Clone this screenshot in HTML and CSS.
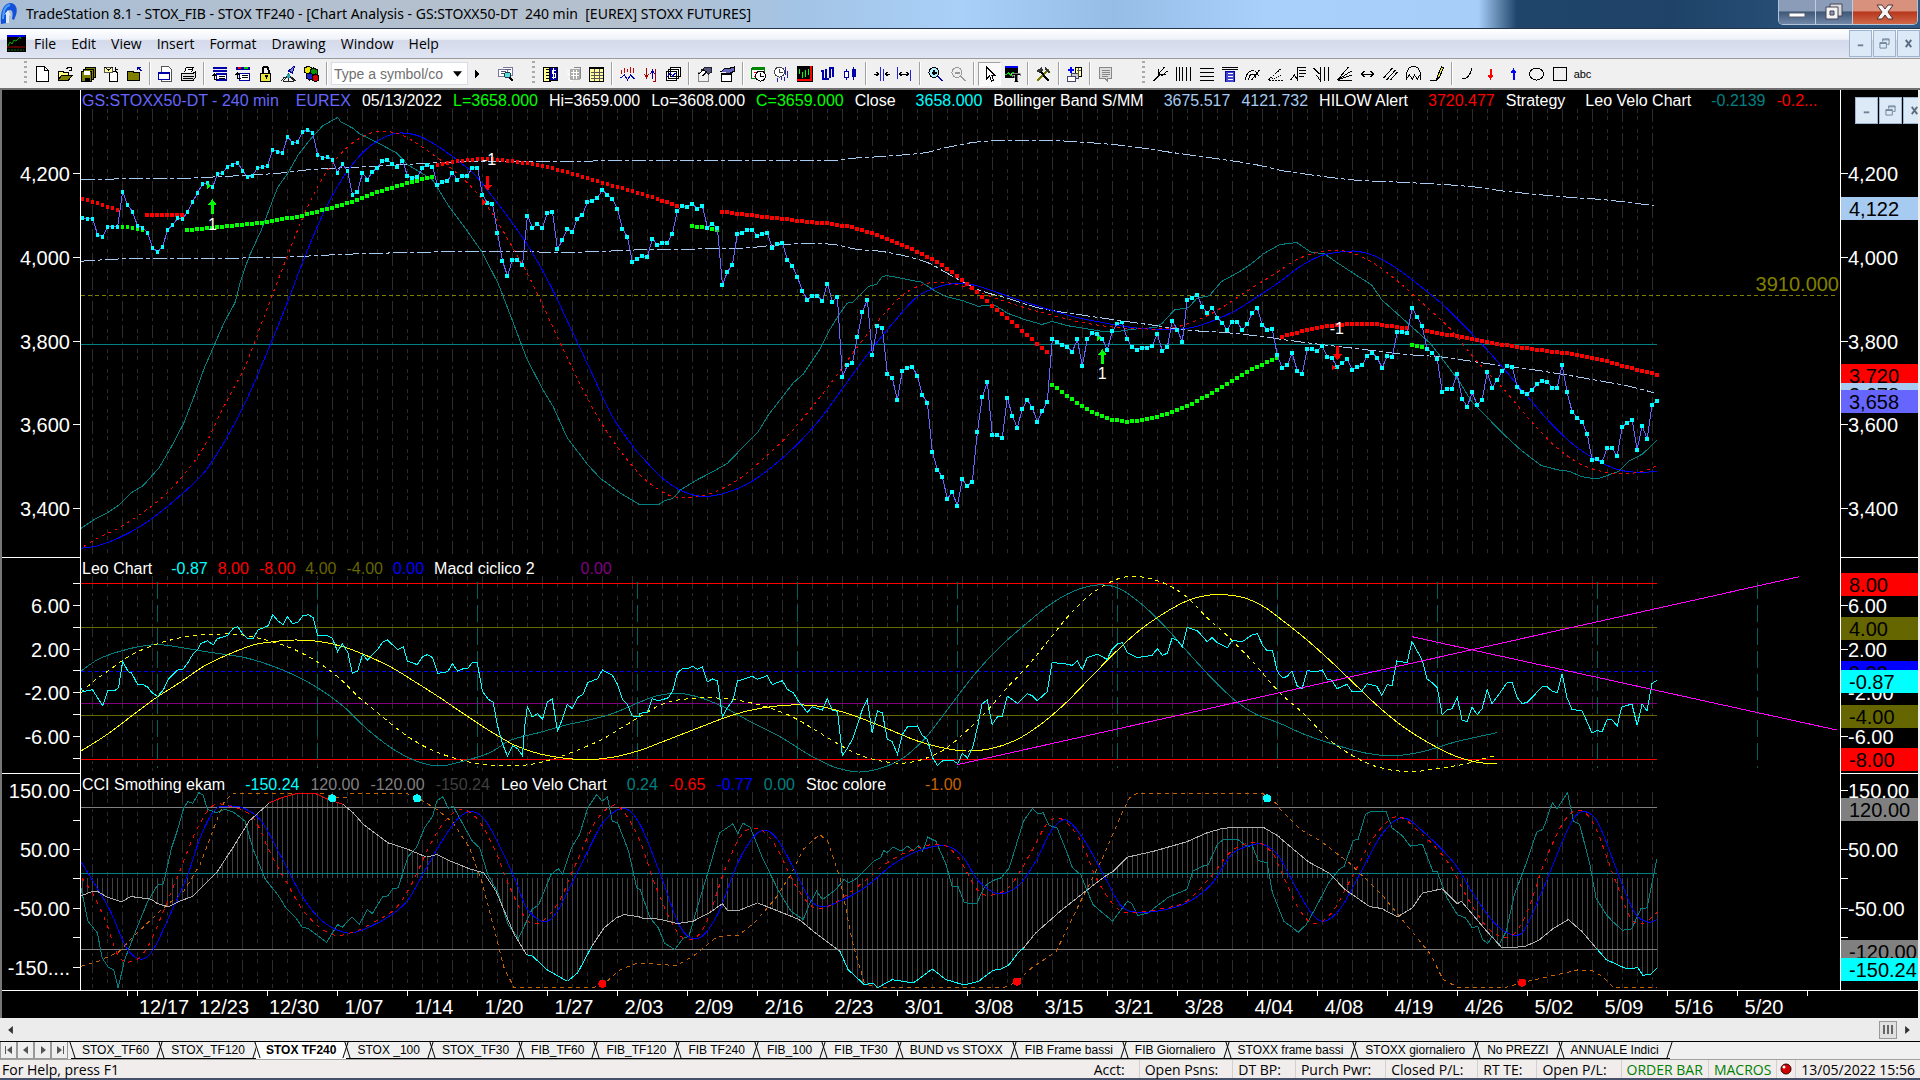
FILE: index.html
```html
<!DOCTYPE html>
<html lang="en">
<head>
<meta charset="utf-8">
<title>TradeStation 8.1 - STOX_FIB - STOX TF240</title>
<link rel="stylesheet" href="styles.css">
</head>
<body>
<header class="titlebar">
  <svg class="app-logo" viewBox="0 0 18 24"><path d="M1 22C0 10 3 2 10 1c6 0 8 6 6 12l-2 5-2-1c1-5 1-9-2-9-4 0-4 7-3 13z" fill="#1450d8"/><path d="M3 17C3 9 5 4 10 3" stroke="#48a0ff" stroke-width="2" fill="none"/><path d="M6 21V12l-2 1 4-5 3 6-2-1v8z" fill="#dce8f8"/></svg>
  <h1 class="title">TradeStation 8.1 - STOX_FIB - STOX TF240 - [Chart Analysis - GS:STOXX50-DT&nbsp; 240 min&nbsp; [EUREX] STOXX FUTURES]</h1>
  <div class="window-controls">
    <button class="wc" aria-label="Minimize"><svg viewBox="0 0 18 18"><path d="M1 10h16v4H1z" fill="#fff" stroke="#555a70"/></svg></button>
    <button class="wc" aria-label="Restore"><svg viewBox="0 0 18 18"><path d="M5 1h12v12H5z" fill="#ddd" stroke="#445"/><path d="M1 4h12v12H1z" fill="#f4f4f4" stroke="#445"/><path d="M5 8h4v4H5z" fill="#8899b0" stroke="#445"/></svg></button>
    <button class="wc wc-close" aria-label="Close"><svg viewBox="0 0 18 18"><path d="M1 2h5l3 4 3-4h5l-5 7 5 7h-5l-3-4-3 4H1l5-7z" fill="#f6f6f6" stroke="#533"/></svg></button>
  </div>
</header>

<nav class="menubar">
  <svg class="doc-icon" viewBox="0 0 19 17"><path d="M0 0h19v17H0z"/><path d="M0 0h18v2H0z" fill="#00f"/><path d="M1 11l2-4 2 2 2-4 2 1 2-2 2-2 1 2" stroke="#0a0" fill="none"/><path d="M0 12h18" stroke="#a00"/><path d="M1 15h16" stroke="#070" stroke-dasharray="2 1"/></svg>
  <button class="menu">File</button><button class="menu">Edit</button><button class="menu">View</button><button class="menu">Insert</button><button class="menu">Format</button><button class="menu">Drawing</button><button class="menu">Window</button><button class="menu">Help</button>
  <div class="mdi-controls">
    <button aria-label="Minimize document"><svg viewBox="0 0 12 12"><path d="M3 7h6v2H3z" fill="#6c8098"/></svg></button>
    <button aria-label="Restore document"><svg viewBox="0 0 12 12"><path d="M4 1h7v6H9M4 1v3M4 2h7M1 5h7v6H1zM1 6h7" stroke="#6c8098" fill="none"/></svg></button>
    <button aria-label="Close document"><svg viewBox="0 0 12 12"><path d="M3 2l6 8M9 2l-6 8" stroke="#5c6c80" stroke-width="2"/></svg></button>
  </div>
</nav>

<div class="toolbar" role="toolbar">
  <div class="tools first">
    <i class="grip"></i>
    <button class="tool" aria-label="New"><svg viewBox="0 0 16 16"><path d="M2 .5h8l4 4v11H2z" fill="#fff" stroke="#000"/><path d="M10 .5v4h4" stroke="#000" fill="none"/></svg></button>
    <button class="tool" aria-label="Open"><svg viewBox="0 0 16 16"><path d="M1 14V5h4l1 1h5v3" fill="#ffff80" stroke="#000"/><path d="M1 14l3-5h11l-4 5z" fill="#808000" stroke="#000"/><path d="M9 3c2-3 4-2 5 0m0-2v3h-3" stroke="#000" fill="none"/></svg></button>
    <button class="tool" aria-label="Save all"><svg viewBox="0 0 16 16"><path d="M5 1h10v10H5z" fill="#808000" stroke="#000"/><path d="M3 3h10v10H3z" fill="#808000" stroke="#000"/><path d="M1 5h10v10H1z" fill="#808000" stroke="#000"/><path d="M3 5h6v4H3z" fill="#fff"/><path d="M4 12h5v3H4z"/></svg></button>
    <button class="tool" aria-label="Send"><svg viewBox="0 0 16 16"><path d="M6 5h6l2 2v8H6z" fill="#fff" stroke="#000"/><path d="M1 1h8v5H1z" fill="#ffffa0" stroke="#555"/><path d="M1 1l4 3 4-3M12 1v3l2-1" stroke="#000" fill="none"/></svg></button>
    <button class="tool" aria-label="Close workspace"><svg viewBox="0 0 16 16"><path d="M1 5h5l1 1h6v8H1z" fill="#808000" stroke="#000"/><path d="M11 1l4 4m-4-1V1h3" stroke="#0000a0" fill="none"/></svg></button>
    <i class="sep"></i>
    <button class="tool" aria-label="Page setup"><svg viewBox="0 0 16 16"><path d="M4 .5h7l3 3v12H4z" fill="#fff" stroke="#555"/><path d="M1 6h11v7H1z" fill="#fff" stroke="#00a"/><path d="M1 6h11v2H1z" fill="#00a"/></svg></button>
    <button class="tool" aria-label="Print"><svg viewBox="0 0 16 16"><path d="M4 6l2-5h7l-2 5" fill="#fff" stroke="#000"/><path d="M1 7h12l2-1v5l-2 3H1z" fill="#ddd" stroke="#000"/><path d="M2 10h11M2 12h10M7 3h4" stroke="#000"/></svg></button>
    <i class="sep"></i>
    <button class="tool" aria-label="Chart window"><svg viewBox="0 0 16 16"><path d="M1 1h14v2H1z" fill="#00a"/><path d="M1 5h14M5 8h10v6H5z" stroke="#00a" fill="#fff" stroke-width="1.5"/><path d="M7 10h6M7 12h6M3 8v5h3M1 10l2-2 2 2" stroke="#000" fill="none"/></svg></button>
    <button class="tool" aria-label="Radar window"><svg viewBox="0 0 16 16"><path d="M1 1h14v3H1z" fill="#00a"/><path d="M3 1h3v2H3z" fill="red"/><path d="M9 1h4v2H9z" fill="#0c0"/><path d="M5 7h10v7H5z" stroke="#00a" fill="#fff"/><path d="M7 9h6M7 11h6M3 7v5h3M1 9l2-2 2 2" stroke="#000" fill="none"/></svg></button>
    <button class="tool" aria-label="Lock"><svg viewBox="0 0 16 16"><path d="M5 7V4c0-4 6-4 6 0v3" stroke="#000" stroke-width="2" fill="none"/><path d="M3 7h10v8H3z" fill="#e8e840" stroke="#000"/><path d="M7 9h3v2H9v2H8v-2H7z"/></svg></button>
    <button class="tool" aria-label="Satellite"><svg viewBox="0 0 16 16"><path d="M8 5l6-5-2 7z" fill="#88a" stroke="#00a"/><path d="M8 8l-5 7h10zM8 8v7M1 15l3-4M15 15l-4-4" stroke="#222" fill="none"/><circle cx="8" cy="10" r="2" fill="#2aa"/></svg></button>
    <button class="tool" aria-label="Blocks"><svg viewBox="0 0 16 16"><path d="M1 2l4-2 3 2v4L4 8 1 6z" fill="#e8e800" stroke="#000"/><path d="M7 4l3-2 4 2v5l-4 1-3-2z" fill="#090" stroke="#000"/><path d="M3 8l4-1 3 2v4l-4 1-3-2z" fill="#22c" stroke="#000"/><path d="M9 10l3-2 3 2v4l-3 2-3-2z" fill="#c00" stroke="#000"/></svg></button>
    <i class="sep"></i>
    <span class="symbol"><input type="text" aria-label="Symbol or command" placeholder="Type a symbol/co"><svg viewBox="0 0 8 5"><path d="M0 0h8L4 5z"/></svg></span>
    <button class="tool go" aria-label="Go"><svg viewBox="0 0 16 16"><path d="M6 3l5 5-5 5z"/></svg></button>
    <button class="tool" aria-label="Symbol lookup"><svg viewBox="0 0 16 16"><path d="M1 3h9v7H1zM5 1h10v8h-3" fill="#fff" stroke="#779"/><path d="M3 5h5M3 7h3M7 3h6" stroke="#557"/><circle cx="10" cy="9" r="3" fill="#5dd" stroke="#234"/><path d="M12 11l3 4" stroke="#000" stroke-width="2"/></svg></button>
  </div>
  <div class="tools second">
    <i class="grip"></i>
    <button class="tool" aria-label="Format symbol"><svg viewBox="0 0 16 16"><path d="M1 1h7v14H1z" fill="#ffff90" stroke="#000"/><path d="M7 1h8v13H7z" fill="#00a" stroke="#000"/><path d="M3 3h4M3 6h3M3 9h3M3 12h4" stroke="#000"/><path d="M13 4h-3v3h3v4h-4M11 2v11" stroke="#fff" fill="none"/></svg></button>
    <button class="tool" aria-label="Format analysis" disabled><svg viewBox="0 0 16 16"><path d="M4 3h10v11H4z" fill="#aaa"/><path d="M5 6h8M5 9h8M8 4v9M11 4v9M1 4h3M2 7l2 2M3 13l3 2" stroke="#fff"/><path d="M8 1h7v12" stroke="#888" fill="none"/></svg></button>
    <button class="tool" aria-label="Data window"><svg viewBox="0 0 16 16"><path d="M1 1h14v14H1z" fill="#ffffa0" stroke="#000"/><path d="M1 1h14v2H1z"/><path d="M6 3v12M11 3v12M2 6h12M2 9h12M2 12h12" stroke="#555"/></svg></button>
    <i class="sep"></i>
    <button class="tool" aria-label="Indicator"><svg viewBox="0 0 16 16"><path d="M2 4v4M5 2v5M8 3v3M11 1v6M14 2v5" stroke="#c00"/><path d="M1 12l4-3 3 5 3-5 4 4" stroke="#00a" fill="none"/></svg></button>
    <button class="tool" aria-label="Strategy"><svg viewBox="0 0 16 16"><path d="M4 2v9M2 8l2 4 2-4M13 3v12h-3" stroke="#a00" fill="none"/><path d="M10 13V5M8 8l2-4 2 4" stroke="#00a" fill="none"/></svg></button>
    <button class="tool" aria-label="Multiple charts"><svg viewBox="0 0 16 16"><path d="M5 1h10v9H5zM3 3h10v9H3zM1 5h10v9H1z" fill="#fff" stroke="#000"/><path d="M2 11l3-4 2 3 3-3" stroke="#00c" fill="none"/></svg></button>
    <i class="sep"></i>
    <button class="tool" aria-label="Send to back"><svg viewBox="0 0 16 16"><path d="M2 6h10v9H2z" fill="#eee" stroke="#888"/><path d="M5 4l4-3h6v5l-3 2z" fill="#557" stroke="#223"/><path d="M2 8l5-4 3 2-4 4" fill="#fff" stroke="#000"/></svg></button>
    <button class="tool" aria-label="Hand off"><svg viewBox="0 0 16 16"><path d="M2 7h10v8H2z" fill="#fff" stroke="#000"/><path d="M2 7h10v2H2z"/><path d="M1 6l5-4h5l4-1v4l-4 2" fill="#66b" stroke="#000"/></svg></button>
    <i class="sep"></i>
    <button class="tool" aria-label="Time"><svg viewBox="0 0 16 16"><path d="M1 2h13v10H1z" fill="#fff" stroke="#070"/><path d="M1 1h13v3H1z" fill="#080"/><path d="M3 6h3v4H3" stroke="red" fill="none"/><circle cx="10" cy="10" r="5" fill="#fff" stroke="#000"/><path d="M10 7v3h3" stroke="#000" fill="none"/></svg></button>
    <button class="tool" aria-label="Interval"><svg viewBox="0 0 16 16"><circle cx="6" cy="6" r="5" fill="#fff" stroke="#444"/><path d="M6 3v3l3 1" stroke="#444" fill="none"/><path d="M12 1v8M14 5v7M4 12v4M8 10v4M11 11v4" stroke="#22a"/></svg></button>
    <button class="tool" aria-label="Bars"><svg viewBox="0 0 16 16"><path d="M0 0h16v16H0z"/><path d="M14 0v14H0" stroke="red" stroke-width="2" fill="none"/><path d="M3 3v5M6 6v6M9 4v7M12 3v6" stroke="#0f0"/></svg></button>
    <button class="tool" aria-label="Bar type"><svg viewBox="0 0 16 16"><path d="M3 4v10M3 5H1M3 13h3M6 3v10h3M10 1v11M10 2h3M13 1v10" stroke="#00a" stroke-width="2" fill="none"/></svg></button>
    <button class="tool" aria-label="Candles"><svg viewBox="0 0 16 16"><path d="M4 3v11M11 1v13" stroke="#00a"/><path d="M2 5h4v6H2z" fill="#fff" stroke="#00a"/><path d="M9 3h4v8H9z" fill="#00a"/></svg></button>
    <i class="sep"></i>
    <button class="tool" aria-label="Squeeze bars"><svg viewBox="0 0 16 16"><path d="M7 1v14M10 3v12" stroke="#22d"/><path d="M0 8h5M3 6l2 2-2 2M16 8h-4M14 6l-2 2 2 2" stroke="#000" fill="none"/></svg></button>
    <button class="tool" aria-label="Spread bars"><svg viewBox="0 0 16 16"><path d="M1 1v12M14 4v11" stroke="#22d"/><path d="M3 8h9M5 6L3 8l2 2M10 6l2 2-2 2" stroke="#000" fill="none"/></svg></button>
    <i class="sep"></i>
    <button class="tool" aria-label="Zoom in"><svg viewBox="0 0 16 16"><circle cx="6.500" cy="6.500" r="5" fill="#aef" stroke="#000"/><path d="M4 6.500h5M6.500 4v5" stroke="#000" stroke-width="2"/><path d="M10 10l5 5" stroke="#009" stroke-width="2"/></svg></button>
    <button class="tool" aria-label="Zoom out" disabled><svg viewBox="0 0 16 16"><circle cx="6.500" cy="6.500" r="5" fill="#eee" stroke="#999"/><path d="M4 6.500h5M10 10l5 5" stroke="#999" stroke-width="2"/></svg></button>
    <i class="sep"></i>
    <button class="tool pressed" aria-label="Pointer"><svg viewBox="0 0 16 16"><path d="M5 1v12l3-3 2 5 2-1-2-5h3z" fill="#fff" stroke="#000"/></svg></button>
    <button class="tool" aria-label="Text note"><svg viewBox="0 0 16 16"><path d="M0 1h13v11H0z"/><path d="M0 0h13v2H0z" fill="#00f"/><path d="M1 9l3-2 2 2 3-3" stroke="#0d0" fill="none"/><path d="M7 7h9v3h-1V9h-2v6h1v1H9v-1h1V9H8v1H7z" stroke="#fff" stroke-width=".5"/></svg></button>
    <i class="sep"></i>
    <button class="tool" aria-label="Tools"><svg viewBox="0 0 16 16"><path d="M2 15L13 3" stroke="#770" stroke-width="2"/><path d="M3 3l10 12" stroke="#000" stroke-width="2"/><path d="M1 5l5-4 2 3-4 3zM10 1l5 5-2 1-4-4z" fill="#333"/></svg></button>
    <i class="sep"></i>
    <button class="tool" aria-label="Add window"><svg viewBox="0 0 16 16"><path d="M1 4h6M4 1v6" stroke="#00f" stroke-width="2"/><path d="M9 1h6v9H9z" fill="#ffffa0" stroke="#000"/><path d="M5 7h7v5H5z" fill="#ccc" stroke="#446"/><path d="M1 10h8v5H1z" fill="#fff" stroke="#446"/><path d="M10 4h4M12 2v7" stroke="#555"/></svg></button>
    <i class="sep"></i>
    <button class="tool" aria-label="Comment" disabled><svg viewBox="0 0 16 16"><path d="M2 1h12v11h-4v3l-3-3H2z" fill="#ddd" stroke="#888"/><path d="M4 4h8M4 6h8M4 8h8M4 10h6" stroke="#888"/></svg></button>
  </div>
  <div class="tools third">
    <i class="grip"></i>
    <button class="tool" aria-label="Pitchfork"><svg class="line" viewBox="0 0 16 16"><path d="M1 15L8 8M6 3v5h7M6 8l6-7M9 10l6-5"/></svg></button>
    <button class="tool" aria-label="Time lines"><svg class="line" viewBox="0 0 16 16"><path d="M1 1v14M4 1v14M7 1v14M11 1v14M15 1v14"/></svg></button>
    <button class="tool" aria-label="Price lines"><svg class="line" viewBox="0 0 16 16"><path d="M1 2h14M1 6h14M1 10h14M1 14h14"/></svg></button>
    <button class="tool" aria-label="Calculator"><svg class="line" viewBox="0 0 16 16"><path d="M0 1h16M0 3h16"/><path d="M4 5h9v11H4z" fill="#44c" stroke="#00a"/><path d="M6 7h5M6 10h5M6 13h5" stroke="#fff"/></svg></button>
    <button class="tool" aria-label="Arcs"><svg class="line" viewBox="0 0 16 16"><path d="M1 14C2 3 12 2 14 10M4 14C5 7 10 6 11 12M7 14L15 4"/></svg></button>
    <button class="tool" aria-label="Gann fan dotted"><svg class="line" viewBox="0 0 16 16"><path d="M1 14h14M1 14L13 3" stroke-dasharray="2 1"/><path d="M5 13l9-4" stroke-dasharray="1 1"/></svg></button>
    <button class="tool" aria-label="Extensions"><svg class="line" viewBox="0 0 16 16"><path d="M0 14l4-5 3 5V1h8M8 4h7M8 7h7M8 10h5"/></svg></button>
    <button class="tool" aria-label="Time extensions"><svg class="line" viewBox="0 0 16 16"><path d="M0 2l6 6M7 1v14L3 9M11 1v14M15 1v14"/></svg></button>
    <button class="tool" aria-label="Fan"><svg class="line" viewBox="0 0 16 16"><path d="M1 14L12 1M1 14h14M1 14L15 5M1 14l14-5"/></svg></button>
    <button class="tool" aria-label="Horizontal line"><svg class="line" viewBox="0 0 16 16"><path d="M2 8h12M5 5L2 8l3 3M11 5l3 3-3 3"/></svg></button>
    <button class="tool" aria-label="Parallel lines"><svg class="line" viewBox="0 0 16 16"><path d="M1 12L10 2M4 14L13 4M8 14l7-8"/></svg></button>
    <button class="tool" aria-label="Cycles"><svg class="line" viewBox="0 0 16 16"><path d="M1 14V8C2-2 14-2 15 8v6M1 13l3-4 3 4 2-4 3 4 2-4"/></svg></button>
    <button class="tool" aria-label="Pencil"><svg class="line" viewBox="0 0 16 16"><path d="M1 14h7"/><path d="M8 14l1-4 4-9 2 1-4 9z" fill="#ee3"/></svg></button>
    <i class="sep"></i>
    <button class="tool" aria-label="Arc"><svg class="line" viewBox="0 0 16 16"><path d="M2 13C8 13 12 8 12 2"/></svg></button>
    <button class="tool" aria-label="Down arrow"><svg viewBox="0 0 16 16"><path d="M7 3h2v6h2l-3 5-3-5h2z" fill="red"/></svg></button>
    <button class="tool" aria-label="Up arrow"><svg viewBox="0 0 16 16"><path d="M7 14h2V7h2L8 2 5 7h2z" fill="#00f"/></svg></button>
    <button class="tool" aria-label="Ellipse"><svg class="line" viewBox="0 0 16 16"><ellipse cx="8" cy="8" rx="7" ry="6"/></svg></button>
    <button class="tool" aria-label="Rectangle"><svg class="line" viewBox="0 0 16 16"><path d="M1.500 1.500h13v13h-13z"/></svg></button>
    <button class="tool abc">abc</button>
  </div>
</div>

<main class="workspace">
  <div class="mdi-controls floating">
    <button aria-label="Minimize chart"><svg viewBox="0 0 12 12"><path d="M3 7h6v2H3z" fill="#6c8098"/></svg></button>
    <button aria-label="Restore chart"><svg viewBox="0 0 12 12"><path d="M4 1h7v6H9M4 1v3M4 2h7M1 5h7v6H1zM1 6h7" stroke="#6c8098" fill="none"/></svg></button>
    <button aria-label="Close chart"><svg viewBox="0 0 12 12"><path d="M3 2l6 8M9 2l-6 8" stroke="#5c6c80" stroke-width="2"/></svg></button>
  </div>
  <section class="panel price" id="price">
    <div class="scale left"></div>
    <div class="plot">
      <svg viewBox="198 -30 4311 1405" preserveAspectRatio="none"></svg>
      <p class="legend"><span class="violet">GS:STOXX50-DT - 240 min</span><span class="violet near">EUREX</span><span>05/13/2022</span><span class="lime">L=3658.000</span><span>Hi=3659.000</span><span>Lo=3608.000</span><span class="lime">C=3659.000</span><span>Close</span><span class="cyan value">3658.000</span><span>Bollinger Band S/MM</span><span class="sky value">3675.517</span><span class="sky">4121.732</span><span>HILOW Alert</span><span class="red value">3720.477</span><span>Strategy</span><span class="value">Leo Velo Chart</span><span class="teal value">-0.2139</span><span class="red">-0.2...</span></p>
    </div>
    <div class="scale right"></div>
  </section>
  <section class="panel lower" id="leo">
    <div class="scale left"></div>
    <div class="plot">
      <svg viewBox="198 11 4311 648" preserveAspectRatio="none"></svg>
      <p class="legend"><span>Leo Chart</span><span class="cyan value">-0.87</span><span class="red">8.00</span><span class="red">-8.00</span><span class="olive">4.00</span><span class="olive">-4.00</span><span class="blue">0.00</span><span>Macd ciclico 2</span><span class="purple far">0.00</span></p>
    </div>
    <div class="scale right"></div>
  </section>
  <section class="panel lower" id="cci">
    <div class="scale left"></div>
    <div class="plot">
      <svg viewBox="198 659 4311 647" preserveAspectRatio="none"></svg>
      <p class="legend"><span>CCI Smothing ekam</span><span class="cyan value">-150.24</span><span class="grey">120.00</span><span class="grey">-120.00</span><span class="dim">-150.24</span><span>Leo Velo Chart</span><span class="teal value">0.24</span><span class="red">-0.65</span><span class="blue">-0.77</span><span class="teal">0.00</span><span>Stoc colore</span><span class="orange far">-1.00</span></p>
    </div>
    <div class="scale right"></div>
  </section>
  <div class="dates" id="dates"></div>
</main>

<div class="scrollbar">
  <button aria-label="Scroll left"><svg viewBox="0 0 6 10"><path d="M6 0v10L0 5z"/></svg></button>
  <span class="track"></span>
  <span class="thumb"><i></i><i></i><i></i></span>
  <button aria-label="Scroll right"><svg viewBox="0 0 6 10"><path d="M0 0v10l6-5z"/></svg></button>
</div>

<nav class="tabs">
  <button class="step" aria-label="First"><svg viewBox="0 0 10 10"><path d="M1 1h1v8H1zM8 1v8L3 5z"/></svg></button>
  <button class="step" aria-label="Previous"><svg viewBox="0 0 10 10"><path d="M7 1v8L2 5z"/></svg></button>
  <button class="step" aria-label="Next"><svg viewBox="0 0 10 10"><path d="M3 1v8l5-4z"/></svg></button>
  <button class="step" aria-label="Last"><svg viewBox="0 0 10 10"><path d="M8 1h1v8H8zM2 1v8l5-4z"/></svg></button>
  <a class="tab" href="#">STOX_TF60</a><a class="tab" href="#">STOX_TF120</a><a class="tab active" href="#">STOX TF240</a><a class="tab" href="#">STOX _100</a><a class="tab" href="#">STOX_TF30</a><a class="tab" href="#">FIB_TF60</a><a class="tab" href="#">FIB_TF120</a><a class="tab" href="#">FIB TF240</a><a class="tab" href="#">FIB_100</a><a class="tab" href="#">FIB_TF30</a><a class="tab" href="#">BUND vs STOXX</a><a class="tab" href="#">FIB Frame bassi</a><a class="tab" href="#">FIB Giornaliero</a><a class="tab" href="#">STOXX frame bassi</a><a class="tab" href="#">STOXX giornaliero</a><a class="tab" href="#">No PREZZI</a><a class="tab" href="#">ANNUALE Indici</a>
</nav>

<footer class="status">
  <span class="help">For Help, press F1</span>
  <span class="wide">Acct:</span><span class="wide">Open Psns:</span><span class="wide">DT BP:</span><span class="wide">Purch Pwr:</span><span class="wide">Closed P/L:</span><span class="wide">RT TE:</span><span class="wide">Open P/L:</span><span class="green">ORDER BAR</span><span class="green">MACROS</span><span class="light"><svg viewBox="0 0 12 12"><circle cx="6" cy="6" r="5" fill="#d00000" stroke="#300"/><circle cx="4" cy="4" r="1.500" fill="#fff"/></svg></span><span class="clock">13/05/2022 15:56</span>
</footer>
<script src="chart.js"></script>
</body>
</html>
```
FILE: styles.css
```css
* { box-sizing: border-box; }
body { margin: 0; height: 100vh; display: flex; flex-direction: column; overflow: hidden; background: #f0f0f0; color: #000; font: 14px "Open Sans", "Noto Sans", sans-serif; }
button { border: 0; padding: 0; margin: 0; background: none; font: inherit; color: inherit; display: flex; align-items: center; justify-content: center; }
h1, p { margin: 0; font-weight: normal; }

.titlebar { flex: none; height: 29px; display: flex; align-items: center; border-bottom: 1px solid #26344a; background: linear-gradient(90deg, #a8bed6 0, #b3c0cf 15%, #b4c0cd 33%, #a3c4e6 42%, #a9d0f8 50%, #96bde6 58%, #a8d0fa 66%, #a6cef8 77%, #20456b 79%, #1f4368 87%, #2f5a85 100%); }
.app-logo { width: 18px; height: 24px; }
.title { flex: 1; padding-left: 8px; font-family: "Noto Sans", sans-serif; font-size: 14px; line-height: 28px; white-space: nowrap; }
.window-controls { align-self: flex-start; display: flex; height: 25px; margin-right: 2px; border: 1px solid #b4c4d8; border-top: 0; border-radius: 0 0 5px 5px; overflow: hidden; }
.wc { width: 37px; background: linear-gradient(#8a9cb8 0 45%, #3f5878 50%, #7288a8); border-right: 1px solid #c0cce0; }
.wc svg { width: 18px; height: 18px; }
.wc-close { width: 64px; background: linear-gradient(#d8917c 0 45%, #b8371c 50%, #d06848); border: 0; }

.menubar { flex: none; height: 30px; display: flex; align-items: center; gap: 1px; padding-left: 7px; border-bottom: 1px solid #9a9a9a; background: linear-gradient(#fff 0, #f0f3fa 35%, #d4daea 40%, #e0e5f4); }
.doc-icon { width: 19px; height: 17px; }
.menu { padding: 0 7px; height: 28px; }
.mdi-controls { display: flex; gap: 1px; margin-left: auto; }
.mdi-controls button { width: 23px; height: 27px; border: 1px solid #9fb4cc; background: #dce9f7; }
.mdi-controls svg { width: 11px; height: 11px; }
.floating { position: absolute; z-index: 3; top: 7px; right: -8px; }

.toolbar { flex: none; height: 31px; display: flex; border-bottom: 2px solid #6f6f6f; background: #f0f0f0; }
.tools { display: flex; align-items: center; height: 29px; }
.first { padding-left: 24px; width: 532px; }
.second { width: 610px; }
.grip { width: 3px; height: 25px; margin-right: 4px; background: repeating-linear-gradient(#aaa 0 2px, #f0f0f0 2px 5px); }
.sep { width: 2px; height: 23px; margin: 0 3px; border-left: 1px solid #a0a0a0; border-right: 1px solid #fff; }
.tool { flex: none; width: 23px; height: 24px; }
.tool svg { width: 17px; height: 16px; shape-rendering: crispEdges; }
.tool .line { fill: none; stroke: #000; }
.pressed { background: #fafafa; border: 1px solid #a0a0a0; border-color: #a0a0a0 #fff #fff #a0a0a0; }
.abc { font: 11px "Liberation Sans", sans-serif; }
.symbol { display: flex; align-items: center; width: 137px; height: 23px; padding-right: 5px; border: 1px solid #d8dce4; background: #fff; }
.symbol input { flex: 1; min-width: 0; border: 0; padding: 0 2px; background: none; font: 14px "Liberation Sans", sans-serif; }
.symbol input::placeholder { color: #707070; opacity: 1; }
.symbol svg { width: 9px; height: 6px; }
.go { width: 17px; margin-right: 9px; }

.workspace { position: relative; flex: 1; min-height: 0; display: flex; flex-direction: column; overflow: hidden; border-left: 2px solid #777; border-right: 2px solid #eee; background: #000; color: #fff; font: 20px "Liberation Sans", Arial, sans-serif; }
.panel { display: grid; grid-template-columns: 79px minmax(0, 1fr) 78px; min-height: 0; }
.price { flex: 468 1 0; }
.lower { flex: 216 1 0; }
.plot { position: relative; min-height: 0; }
.plot svg { position: absolute; inset: 0; width: 100%; height: 100%; shape-rendering: crispEdges; }
.plot svg * { vector-effect: non-scaling-stroke; }
.plot .mark { position: absolute; transform: translate(-50%, -50%); font-size: 16px; line-height: 16px; }
.plot .level { position: absolute; transform: translateY(-50%); right: 1px; line-height: 20px; color: #808000; }
.legend { position: relative; display: flex; gap: 11px; padding: 2px 0 0 1px; font-size: 16px; line-height: 18px; white-space: nowrap; }
#leo .legend { gap: 10px; }
.near { margin-left: 6px; }
.value { margin-left: 9px; }
.far { margin-left: 36px; }
#cci .far { margin-left: 28px; }
.violet { color: #6666ff; } .lime { color: #00ff00; } .cyan { color: #00ffff; } .sky { color: #a6caf0; }
.red { color: #ff0000; } .teal { color: #008080; } .olive { color: #666600; } .blue { color: #0000ff; }
.purple { color: #800080; } .grey { color: #808080; } .dim { color: #404040; } .orange { color: #c86400; }

.scale { position: relative; overflow: hidden; border-bottom: 1px solid #fff; }
#cci .scale { border-bottom: 0; }
.left { border-right: 1px solid #fff; }
.right { border-left: 1px solid #fff; }
.tick { position: absolute; width: 7px; height: 1px; background: #fff; }
.left .tick { right: 0; }
.right .tick { left: 0; }
.label { position: absolute; transform: translateY(-50%); padding-top: 2px; line-height: 22px; }
.left .label { right: 10px; }
.right .label { left: 7px; }
.badge { position: absolute; left: 0; right: 0; height: 23px; padding-left: 8px; line-height: 25px; overflow: hidden; color: #000; }

.dates { flex: none; position: relative; height: 28px; border-top: 1px solid #fff; }
.date { position: absolute; top: 0; width: 54px; text-align: center; line-height: 32px; }
.date::before { content: ""; position: absolute; left: 0; top: 0; width: 1px; height: 5px; background: #fff; }

.scrollbar { flex: none; display: flex; align-items: center; height: 23px; padding: 0 10px 0 8px; background: #ececec; }
.scrollbar button svg { width: 5px; height: 8px; fill: #333; }
.track { flex: 1; }
.thumb { display: flex; gap: 2px; align-items: center; justify-content: center; width: 18px; height: 18px; margin-right: 8px; border: 1px solid #999; background: #e0e0e0; }
.thumb i { width: 2px; height: 9px; background: #666; }

.tabs { flex: none; display: flex; height: 18px; border-top: 1px solid #000; font: 12px "Liberation Sans", Arial, sans-serif; }
.step { width: 17px; border: 1px solid #999; border-top: 0; background: #eee; }
.step svg { width: 10px; height: 10px; fill: #555; }
.tab { position: relative; padding: 0 11px; height: 17px; line-height: 16px; color: #000; text-decoration: none; white-space: nowrap; background: linear-gradient(#000, #000) 0 100% / 100% 1px no-repeat; }
.tab:nth-of-type(1) { margin-left: 3px; }
.tab::before, .tab::after { content: ""; position: absolute; top: 0; height: 16px; border-left: 1px solid #000; }
.tab::before { left: 1px; transform: skewX(18deg); }
.tab::after { right: 0; transform: skewX(-18deg); }
.active { background: #fff; font-weight: bold; padding: 0 10px; }

.status { flex: none; display: flex; height: 21px; border-top: 1px solid #a0a0a0; border-bottom: 2px solid #45506a; background: #f1eded; line-height: 20px; white-space: nowrap; }
.status span { padding: 0 5px; border-right: 1px solid #d4d0d0; }
.status .help { flex: 1; padding-left: 2px; border: 0; }
.status .wide { padding-right: 14px; }
.status .green { color: #008000; }
.status .light { padding: 0 3px; }
.light svg { width: 12px; height: 12px; }
.status .clock { padding-right: 5px; border: 0; }
```
FILE: chart.js
```js
// Bars are 12.25 units apart; every series is stored in pages of 128 bars (1568 units).
const BAR = 12.25, PAGE = 1568, FIRST = 202, LEFT = 198, LAST = 4061;
const NS = "http://www.w3.org/2000/svg";

function points(...pages) {
  return pages.flatMap((page, n) => page ? page.split(",").map(p => {
    const [x, y] = p.trim().split(" ").map(Number);
    return [x + n * PAGE, y];
  }) : []);
}
function add(panel, name, attrs) {
  const el = document.createElementNS(NS, name);
  for (const k in attrs) el.setAttribute(k, attrs[k]);
  document.querySelector("#" + panel + " .plot svg").append(el);
}
function path(panel, d, stroke, dash) {
  add(panel, "path", { d, stroke, fill: "none", ...(dash ? { "stroke-dasharray": dash } : {}) });
}
function line(panel, pts, stroke, dash) { path(panel, "M" + pts.map(p => p.join(" ")).join("L"), stroke, dash); }
function curve(panel, p, stroke, dash) {
  let d = "M" + p[0];
  for (let i = 0; i < p.length - 1; i++) {
    const a = p[i - 1] || p[i], b = p[i], c = p[i + 1], e = p[i + 2] || c;
    const k = (c[0] - b[0]) / 3;
    const s1 = (c[1] - a[1]) / (c[0] - a[0] || 1), s2 = (e[1] - b[1]) / (e[0] - b[0] || 1);
    d += `C${b[0] + k} ${b[1] + k * s1} ${c[0] - k} ${c[1] - k * s2} ${c[0]} ${c[1]}`;
  }
  path(panel, d, stroke, dash);
}
function level(panel, y, stroke, dash, to = LAST) { line(panel, [[LEFT, y], [to, y]], stroke, dash); }
function at(p, x) {
  for (let i = 1; i < p.length; i++) if (p[i][0] >= x) {
    const a = p[i - 1], b = p[i];
    return a[1] + (b[1] - a[1]) * (x - a[0]) / (b[0] - a[0] || 1);
  }
  return p[p.length - 1][1];
}
function squares(list, fill) {
  add("price", "path", { fill, d: list.map(([x, y]) => `M${x - 5} ${y - 6}h9v12h-9z`).join("") });
}
function trail(p, fill) {
  const list = [];
  for (let x = p[0][0]; x <= p[p.length - 1][0] + 2; x += BAR) list.push([x, at(p, x)]);
  squares(list, fill);
}

// Session grid, one line every three bars
for (const [panel, top, bottom] of [["price", 27, 1365], ["leo", 66, 650], ["cci", 713, 1300]])
  for (let k = 2, n = 0; k <= 314; k += 3, n++) {
    const x = FIRST + k * BAR;
    line(panel, [[x, top], [x, bottom]], "#2c2c2c", n % 2 ? "4 3 4 9" : "13 4 3 4");
  }

// ---- Price panel
level("price", 733, "#008080");
level("price", 586, "#808000", "4 3", 4501);
curve("price", points("198 238,450 235,540 230,620 225,690 219,760 209,850 203,920 199,1000 193,1100 187,1200 185,1400 184,1560 181", "0 181,485 181,510 176,600 169,700 158,750 143,820 127,900 121,1000 121,1100 128,1200 139,1300 157,1400 174,1500 192,1560 208", "0 211,60 222,180 240,300 247,460 259,560 275,700 291,800 300,918 317"), "#a6caf0", "14 3 4 3");
curve("price", points("198 484,300 477,550 475,690 472,850 463,1000 458,1180 454,1400 457,1560 450", "0 449,100 449,190 445,260 444,360 433,470 433,530 448,600 456,700 486,760 525,830 570,900 595,980 625,1080 645,1180 663,1280 680,1330 690,1450 700,1560 716", "0 718,100 734,200 748,300 763,400 772,500 790,600 806,700 825,760 838,850 858,918 879"), "#a6caf0", "14 3 4 3");
line("price", points("198 1286,230 1260,260 1241,290 1217,320 1180,350 1158,390 1103,420 1040,450 970,475 890,500 805,525 735,550 665,575 610,590 540,610 470,640 390,665 310,680 262,705 220,730 165,760 118,790 78,827 52,835 66,865 85,880 101,920 125,970 158,1000 195,1060 240,1100 320,1140 385,1180 455,1220 550,1250 645,1290 775,1330 870,1355 920,1390 1015,1440 1095,1470 1135,1520 1180,1567 1215", "45 1215,60 1203,80 1197,100 1170,140 1140,180 1115,215 1090,250 1045,290 995,315 945,350 890,375 850,400 823,440 750,465 690,490 640,508 610,522 607,560 560,580 553,592 532,605 527,640 535,690 547,725 575,750 590,790 602,828 619,870 616,900 640,945 660,985 674,1010 665,1050 678,1100 688,1140 696,1170 695,1210 688,1265 683,1280 670,1310 630,1345 623,1365 595,1395 588,1425 545,1470 515,1500 490,1530 460,1567 435", "0 434,42 428,75 456,110 462,140 488,180 520,225 555,250 600,300 655,370 732,400 780,440 845,470 905,510 955,550 1005,590 1050,640 1097,680 1110,710 1115,740 1131,778 1138,830 1115,855 1085,890 1062,925 1020"), "#008080");
curve("price", points("198 1346,240 1338,290 1315,350 1275,400 1230,450 1178,500 1118,550 1025,600 910,650 770,700 620,750 460,800 320,850 215,900 145,950 107,985 99,1030 110,1080 145,1130 190,1160 220,1200 280,1250 360,1300 450,1350 560,1400 690,1450 820,1500 950,1560 1055", "0 1065,50 1130,100 1172,150 1190,200 1183,260 1155,320 1105,380 1040,440 960,500 860,560 760,620 670,680 590,740 558,780 551,820 556,880 580,940 605,1000 628,1060 650,1120 665,1200 682,1260 688,1340 686,1400 665,1460 632,1520 585", "0 546,50 500,100 468,150 456,190 454,230 467,280 500,330 545,400 615,470 700,530 780,600 880,660 965,720 1035,780 1083,830 1110,880 1118,925 1115"), "#0000ff");
curve("price", points("205 1340,240 1315,290 1285,350 1238,400 1190,450 1125,500 1040,540 940,570 870,600 800,650 640,700 480,750 330,800 215,850 143,900 103,940 94,990 108,1050 155,1100 200,1150 255,1200 330,1250 430,1300 540,1350 670,1400 800,1450 920,1500 1020", "0 1125,40 1165,80 1190,130 1193,180 1178,240 1140,300 1080,360 1010,420 925,480 830,540 730,600 640,650 580,700 552,740 547,800 562,860 590,920 615,1000 643,1080 667,1160 682,1220 687,1300 685,1350 668,1410 635,1480 580", "0 512,40 480,90 458,140 451,190 465,240 498,290 545,350 610,420 690,480 780,550 870,620 970,680 1045,740 1095,790 1115,840 1122,890 1115,925 1098"), "#ff0000", "3 4");

trail(points("202 296,288 330"), "red");
trail(points("361 345,447 345"), "red");
trail(points("1072 194,1100 187,1145 180,1200 177,1260 184,1330 198,1400 220,1470 247,1520 263", "6 282,50 300,92 317"), "red");
trail(points("", "202 336,300 350,400 364,480 373,530 385,600 413,660 443,720 480,770 520,820 570,870 625,930 685,998 758"), "red");
trail(points("", "", "6 711,60 692,120 678,180 671,240 674,312 686"), "red");
trail(points("", "", "361 695,440 710,520 730,600 745,700 760,780 777,840 798,880 811,925 825"), "red");
trail(points("300 380,325 383,349 390"), "lime");
trail(points("459 390,500 386,560 379,640 369,740 348,800 328,850 311,900 288,950 267,1000 249,1060 230"), "lime");
trail(points("", "128 378,190 390"), "lime");
trail(points("", "1010 855,1060 900,1110 938,1150 958,1190 966,1240 960,1300 940,1350 915,1400 880,1450 845,1500 808,1560 774"), "lime");
trail(points("", "", "324 735,349 741"), "lime");

const closes = `355 356 357 404 411 380 380 380 275 315 336 378 383 399 443 456 440 390 375 355 356 336 305 279 252 248 262 222 218 200 194 188
212 231 227 203 200 198 149 155 158 110 128 125 95 90 98 164 173 170 180 218 192 213 285 276 218 239 215 203 182 180 192 201
183 228 234 231 204 195 200 256 246 243 218 240 229 227 203 203 285 309 311 399 483 528 479 479 495 347 384 372 384 338 336 448
420 386 396 356 345 306 303 294 269 285 296 326 386 411 486 478 468 470 416 435 429 429 401 332 317 321 312 326 318 383 372 384
555 516 495 402 399 390 390 408 402 399 444 432 429 480 498 531 573 600 588 588 603 551 605 592 831 797 791 711 636 600 765 678
684 822 836 900 813 804 801 828 885 909 1056 1110 1131 1197 1178 1218 1139 1158 1146 998 891 846 1007 1007 1014 894 948 984 927 900 924 966
933 906 719 726 735 741 756 719 798 719 699 702 717 750 695 671 668 719 743 750 744 744 738 702 753 743 662 690 726 600 594 585
621 639 624 654 669 690 665 665 692 672 639 624 675 690 687 765 806 795 760 813 822 749 749 753 738 771 775 803 791 779 810 803
797 768 759 774 804 768 771 696 696 699 624 651 680 747 759 777 876 867 867 822 897 921 878 915 900 818 864 840 815 798 801 861
876 882 870 852 843 846 864 864 797 878 936 954 966 1002 1080 1077 1086 1046 1046 1068 983 969 960 1050 978 1017 915 903`
  .split(/\s+/).map((y, k) => [FIRST + k * BAR, +y]);
line("price", closes, "#6666ff");
squares(closes, "cyan");

// Strategy entries: arrow x, arrow centre y, long or short, label y, label, label x, fill marker y
for (const [x, y, up, ty, text, tx, tri] of [
  [520, 320, true, 374, "1", 520, 258], [1195, 250, false, 180, "-1", 1198, 307],
  [2701, 770, true, 822, "1", 2701, 715], [3277, 760, false, 688, "-1", 3276, 803]]) {
  const s = up ? 1 : -1, c = up ? "lime" : "red";
  add("price", "path", { fill: c, d: `M${x} ${y - 22 * s}l11 ${18 * s}h-7v${26 * s}h-8v${-26 * s}h-7z M${x - 14} ${tri - 10}l11 10l-11 10z` });
  const el = document.createElement("span");
  el.className = "mark";
  el.textContent = text;
  el.style.left = (tx - 198) / 43.11 + "%";
  el.style.top = (ty + 30) / 14.05 + "%";
  document.querySelector("#price .plot").append(el);
}
const lv = document.createElement("span");
lv.className = "level";
lv.textContent = "3910.000";
lv.style.top = (552 + 30) / 14.05 + "%";
document.querySelector("#price .plot").append(lv);

// ---- Leo Chart panel
level("leo", 86, "red"); level("leo", 614, "red");
level("leo", 218, "#666600"); level("leo", 482, "#666600");
level("leo", 446, "#800080"); level("leo", 350, "#0000ff", "4 3");
for (let x = 386; x < 4400; x += 392) line("leo", [[x, 82], [x, 640]], "#006060", "17 6");
curve("leo", points("198 350,240 315,290 292,340 277,390 271,450 281,520 295,600 310,660 332,720 362,780 402,840 455,900 525,960 582,1020 620,1075 635,1130 622,1200 595,1250 558,1320 535,1390 511,1440 498,1500 478", "0 443,40 425,90 417,140 427,200 455,260 495,340 545,420 605,480 640,535 653,580 645,640 615,700 550,760 455,820 360,880 280,940 215,1000 155,1060 112,1120 92,1170 100,1220 140,1280 208,1340 290,1400 370,1460 440,1510 480", "0 507,60 540,140 573,210 596,280 604,350 592,430 563,532 535"), "#008080");
curve("leo", points("198 415,230 380,270 345,310 310,350 285,400 263,460 246,540 239,600 243,660 260,720 285,780 325,830 370,880 430,930 480,980 530,1030 570,1080 598,1130 617,1180 630,1240 635,1300 630,1360 612,1420 585,1480 552,1530 515", "0 487,60 447,130 432,200 432,280 448,360 480,420 520,480 565,540 603,600 622,650 626,700 612,750 582,800 530,850 470,900 400,950 335,1000 260,1050 185,1100 125,1150 85,1190 68,1240 70,1290 90,1340 128,1390 190,1440 245,1500 320", "0 415,60 480,120 555,180 605,240 638,320 652,400 640,450 630,500 613,532 603"), "#ffff00", "4 4");
curve("leo", points("198 590,260 542,320 487,380 432,440 385,500 335,560 300,620 272,670 262,722 257,780 261,840 277,900 305,960 340,1020 385,1080 432,1140 482,1200 530,1260 572,1320 598,1380 611,1435 616,1500 609", "0 588,60 560,140 522,220 485,290 463,370 452,440 456,520 482,600 520,680 560,740 580,800 590,860 583,920 558,980 512,1040 450,1100 375,1160 300,1220 232,1280 180,1340 140,1390 123,1430 121,1480 130,1530 158", "0 192,60 250,120 315,180 385,240 455,300 515,360 562,420 600,470 620,510 628,532 628"), "#ffff00");
line("leo", points("198 400,203 412,226 406,251 454,264 409,282 408,290 400,300 322,314 352,322 356,337 391,350 391,361 398,372 415,386 426,400 406,412 375,435 347,448 345,460 325,472 300,484 285,492 268,508 259,522 272,532 253,557 244,570 223,582 217,594 238,606 252,620 252,632 227,657 214,668 181,680 199,693 211,704 187,717 209,730 203,741 185,755 181,767 190,778 244,802 244,814 252,827 292,838 268,852 295,863 357,876 350,888 300,900 317,925 285,937 264,949 257,974 286,988 278,998 320,1022 331,1035 307,1047 301,1060 310,1072 357,1097 352,1108 328,1121 350,1133 344,1145 343,1157 325,1169 325,1182 411,1196 435,1208 443,1219 515,1231 568,1243 605,1256 574,1268 583,1280 604,1285 520,1292 457,1304 488,1317 478,1329 495,1341 443,1353 434,1366 530,1378 494,1390 450,1402 463,1415 430,1428 420,1440 385,1464 373,1476 347,1500 363,1513 390,1525 435,1537 450,1549 485,1566 486", "0 477,18 474,30 433,45 440,70 430,80 410,92 355,104 343,117 343,129 336,141 345,153 338,165 382,178 374,190 380,202 489,214 460,228 437,239 380,263 371,275 366,288 375,312 364,324 391,349 379,361 405,376 416,388 440,410 474,422 457,447 467,459 433,471 467,484 471,496 604,508 582,522 552,545 465,557 436,569 535,582 470,594 475,606 554,618 562,631 600,643 540,655 518,680 515,692 543,704 555,717 610,729 633,741 620,765 617,779 628,790 597,803 611,815 580,827 520,838 450,851 436,863 510,876 488,888 486,900 425,925 447,949 418,961 424,974 439,998 412,1010 325,1035 327,1059 333,1072 320,1084 346,1096 310,1121 300,1145 315,1157 285,1170 269,1182 265,1194 295,1218 310,1255 303,1268 283,1280 303,1292 297,1304 252,1317 258,1329 278,1341 219,1366 229,1390 262,1402 250,1415 265,1440 280,1451 258,1476 262,1500 242,1513 238,1527 275,1537 289,1550 290,1562 350", "0 362,8 371,18 366,30 350,43 396,55 402,67 349,91 352,104 347,116 374,128 378,140 403,165 390,177 412,200 411,214 388,238 396,250 424,263 391,275 394,287 320,312 325,324 262,349 317,361 374,374 386,386 400,398 481,410 467,422 463,435 430,447 498,459 502,471 458,484 481,496 463,508 406,520 448,533 427,557 385,570 385,582 430,594 448,606 444,618 430,643 397,655 397,667 410,680 415,692 358,704 430,716 465,741 470,765 535,778 529,790 532,802 496,814 496,827 515,838 458,863 449,876 513,888 449,900 470,912 388,924 378"), "#00ffff");
line("leo", [[2346, 631], [4409, 67]], "#ff00ff");
line("leo", [[3460, 247], [4501, 527]], "#ff00ff");

// ---- CCI panel
const cci = points("198 1024,225 1011,240 1012,262 1028,298 1042,320 1026,370 1034,385 1047,412 1057,440 1040,472 1025,500 990,530 955,570 880,610 800,660 745,690 730,730 716,770 716,800 733,840 750,865 775,890 810,950 865,1000 885,1045 908,1070 900,1100 918,1150 943,1185 955,1215 1010,1260 1140,1290 1200,1305 1205,1340 1245,1390 1280,1415 1255,1450 1175,1480 1120,1510 1090,1530 1080,1567 1087", "0 1090,50 1094,90 1107,130 1100,170 1075,202 1047,215 1069,240 1069,288 1045,350 1075,390 1095,430 1135,490 1190,510 1245,550 1290,570 1285,583 1299,618 1275,670 1285,716 1243,750 1275,795 1291,830 1280,865 1247,885 1243,905 1230,925 1197,940 1180,970 1135,1030 1070,1090 1012,1140 965,1160 950,1195 908,1260 890,1340 862,1390 835,1430 821,1527 818,1567 847", "0 850,70 922,120 955,160 1005,220 1056,250 1062,288 1087,325 1060,350 1015,398 1003,435 1048,445 1040,500 1120,545 1180,600 1176,635 1157,670 1122,707 1095,740 1130,778 1184,800 1215,845 1240,865 1243,876 1237,890 1262,910 1258,924 1240");
let bars = "";
for (let x = FIRST; x <= LAST; x += BAR) bars += `M${x} 971V${at(cci, x)}`;
path("cci", bars, "#424242");
level("cci", 760, "#808080"); level("cci", 1184, "#808080"); level("cci", 958, "#008080");
line("cci", points("198 1235,240 1220,290 1192,340 1130,400 1060,450 1010,490 930,530 800,550 740,570 716,700 716,790 716,815 731,850 728,860 716,995 716,1030 735,1070 765,1110 805,1150 880,1180 980,1210 1120,1235 1240,1260 1300,1450 1300,1480 1287,1520 1245,1567 1223", "0 1225,90 1233,130 1205,190 1145,240 1143,280 1105,330 1035,370 960,400 885,440 840,460 860,490 970,520 1160,550 1285,580 1300,890 1300,925 1280,960 1240,1020 1190,1080 1040,1130 920,1180 780,1200 730,1220 716,1525 716,1567 755", "0 763,50 825,100 860,170 925,250 1020,310 1110,370 1200,400 1275,440 1300,550 1300,590 1285,680 1260,730 1246,765 1247,790 1265,820 1300,924 1300"), "#c86400", "4 4");
line("cci", points("198 1000,215 1100,238 1135,250 1210,265 1238,278 1245,289 1300,305 1215,335 1120,360 1045,385 992,400 988,420 880,435 825,450 760,460 742,472 747,487 715,497 722,508 765,530 775,550 765,570 772,600 800,620 885,650 975,680 1020,700 1060,725 1090,740 1118,755 1122,775 1140,800 1163,827 1110,838 1118,862 1088,880 1110,900 1065,912 1077,937 1027,950 1024,962 1003,975 1000,1000 905,1020 880,1040 820,1060 785,1070 740,1085 727,1098 762,1110 755,1130 800,1157 860,1175 880,1195 960,1220 1015,1245 1110,1270 1152,1290 1100,1303 1065,1320 1050,1350 960,1368 942,1378 960,1400 880,1420 840,1440 760,1462 720,1475 740,1488 728,1500 800,1513 805,1540 890,1560 1000", "0 1005,25 1090,45 1120,60 1165,85 1185,105 1152,120 1145,140 1060,170 940,195 835,220 815,227 808,240 838,252 806,270 818,300 910,340 1010,370 1070,400 1095,415 1050,433 1010,447 1035,480 1005,500 975,512 985,530 972,575 918,590 910,597 888,605 895,620 878,640 890,655 875,670 888,682 873,693 890,705 848,725 860,750 930,765 995,780 997,795 1045,825 1047,845 995,865 978,885 970,905 940,925 860,940 800,962 762,975 778,988 775,1003 813,1022 820,1045 890,1060 940,1080 960,1110 1050,1158 1100,1195 1040,1205 1047,1220 1083,1245 1075,1295 1028,1340 1005,1355 950,1375 937,1393 930,1415 870,1430 855,1465 855,1490 878,1500 872,1515 918,1537 925,1550 1015", "0 1070,10 1100,30 1118,45 1133,65 1110,90 1055,120 985,145 945,158 935,180 858,192 855,210 780,225 770,260 770,275 820,300 843,320 875,350 870,375 950,385 950,410 1030,435 1080,455 1090,472 1120,485 1115,497 1155,510 1167,520 1145,537 1172,555 1130,575 1020,600 940,630 833,645 825,668 745,680 763,705 715,720 800,735 810,760 930,775 1030,800 1080,815 1100,840 1127,862 1123,885 1063,900 1060,924 915"), "#008080");
curve("cci", points("198 922,230 985,270 1070,310 1180,345 1214,375 1185,420 1070,460 960,490 850,525 768,560 755,600 763,640 800,690 910,740 1025,790 1100,850 1135,900 1120,960 1080,1000 1035,1040 950,1080 865,1120 795,1155 771,1190 800,1230 890,1260 970,1290 1060,1330 1101,1360 1080,1400 990,1440 890,1480 800,1530 762", "0 810,50 960,100 1120,145 1150,190 1080,240 925,280 845,310 828,340 860,380 950,420 1040,450 1056,490 1040,550 1000,620 930,680 890,750 874,790 905,830 980,880 1018,930 990,970 920,1010 825,1045 797,1090 860,1140 970,1180 1055,1220 1073,1280 1067,1340 1045,1400 990,1450 900,1490 875,1520 868,1550 885", "0 910,40 1000,80 1080,110 1100,150 1060,200 950,250 840,300 790,350 830,430 930,480 1030,530 1110,575 1142,600 1125,650 990,700 840,725 785,750 772,780 805,830 960,870 1075,905 1103,924 1095"), "#0000ff");
curve("cci", points("200 970,230 1025,260 1105,290 1205,325 1220,360 1180,400 1070,440 950,480 830,520 755,560 755,620 790,660 890,700 980,750 1080,815 1140,870 1130,920 1100,970 1060,1010 985,1050 880,1090 800,1130 766,1170 795,1210 880,1250 1000,1290 1095,1325 1103,1370 1040,1410 930,1460 800,1505 752,1530 775", "0 860,40 1000,90 1130,125 1155,160 1110,210 940,250 840,290 823,330 870,380 990,425 1058,470 1050,540 990,600 930,660 890,740 870,780 910,830 1010,870 1020,910 990,960 890,1000 805,1035 795,1080 860,1120 975,1170 1062,1210 1073,1280 1062,1340 1040,1400 965,1450 890,1510 864,1550 895", "0 940,45 1060,85 1107,130 1070,180 960,230 850,285 787,340 830,410 920,460 1030,510 1120,560 1148,600 1090,650 920,700 795,735 768,770 810,820 970,860 1090,890 1106,924 1075"), "#ff0000", "4 5");
for (let i = 1; i < cci.length; i++) {
  const y = (cci[i][1] + cci[i - 1][1]) / 2;
  line("cci", [cci[i - 1], cci[i]], y < 760 ? "red" : y > 1184 ? "cyan" : "#b0b0b0");
}
for (const [cx, cy, fill] of [[814, 732, "cyan"], [1022, 732, "cyan"], [3105, 732, "cyan"], [1476, 1287, "red"], [2492, 1281, "red"], [3730, 1284, "red"]])
  add("cci", "ellipse", { cx, cy, rx: 10, ry: 12, fill });

// ---- Value scales
const scales = {
  price: { top: -30, span: 1405, labels: { 220: "4,200", 472: "4,000", 724: "3,800", 976: "3,600", 1228: "3,400" }, ticks: [],
    badges: [[292, "4,122", "#a6caf0"], [795, "3,720", "#ff0000"], [852, "3,678", "#a6caf0"], [873, "3,658", "#6666ff"]] },
  leo: { top: 11, span: 648, labels: { 152: "6.00", 284: "2.00", 416: "-2.00", 548: "-6.00" }, ticks: [86, 218, 350, 482, 614],
    badges: [[57, "8.00", "#ff0000"], [189, "4.00", "#666600"], [321, "0.00", "#0000ff"], [348, "-0.87", "#00ffff"], [453, "-4.00", "#666600"], [585, "-8.00", "#ff0000"]] },
  cci: { top: 659, span: 647, labels: { 706: "150.00", 884: "50.00", 1060: "-50.00", 1238: "-150.00" }, ticks: [796, 971, 1148],
    badges: [[732, "120.00", "#808080"], [1155, "-120.00", "#808080"], [1209, "-150.24", "#00ffff"]] }
};
for (const id in scales) {
  const s = scales[id];
  for (const side of ["left", "right"]) {
    const box = document.querySelector(`#${id} .scale.${side}`);
    const put = (cls, y, text) => {
      const el = document.createElement("span");
      el.className = cls;
      el.textContent = text || "";
      el.style.top = (y - s.top) / s.span * 100 + "%";
      box.append(el);
      return el;
    };
    for (const y in s.labels) {
      const cut = s.labels[y] === "-150.00";
      // The lowest value is abbreviated on the left and lies under a badge on the right
      if (cut && side === "right") continue;
      put("tick", y);
      put("label", y, cut ? "-150...." : s.labels[y]);
    }
    s.ticks.forEach(y => put("tick", y));
    if (side === "right") s.badges.forEach(([y, text, bg]) => { put("badge", y, text).style.background = bg; });
  }
}

// ---- Date axis
const dates = ["12/17", "12/23", "12/30", "1/07", "1/14", "1/20", "1/27", "2/03", "2/09", "2/16", "2/23", "3/01", "3/08", "3/15", "3/21", "3/28", "4/04", "4/08", "4/19", "4/26", "5/02", "5/09", "5/16", "5/20", ""];
[["", 125], ...dates.map((d, i) => [d, i ? 125 + 70 * i : 135])].forEach(([text, x]) => {
  const el = document.createElement("span");
  el.className = "date";
  el.textContent = text;
  el.style.left = x / 19.16 + "%";
  document.getElementById("dates").append(el);
});
```
